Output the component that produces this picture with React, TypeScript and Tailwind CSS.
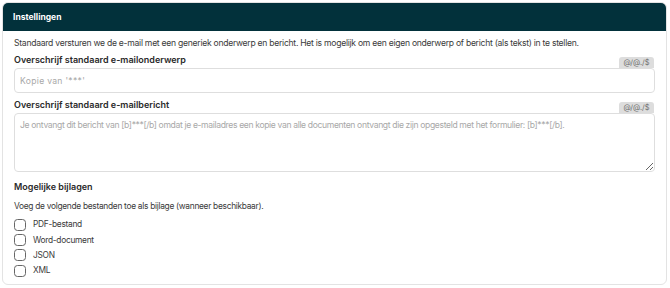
const font = { fontFamily: "Inter, 'Noto Sans', sans-serif" };

function FieldLabel({ label }: { label: string }) {
  return (
    <div className="flex items-end justify-between">
      <span className="pb-[2px] text-[9px] font-semibold leading-[12px] text-[#2a2a2a]">{label}</span>
      <span className="mr-[1px] flex h-[11px] w-[35px] items-center justify-center rounded-t-[3px] bg-[#dddddd] text-[7.5px] leading-none text-[#707070]">
        @/@./$
      </span>
    </div>
  );
}

function Check({ label }: { label: string }) {
  return (
    <label className="flex h-[15.3px] items-center gap-[7px]">
      <span className="h-[12px] w-[12px] rounded-[3.5px] border border-[#666666] bg-white" />
      <span className="text-[8.4px] leading-none tracking-[-0.3px] text-[#3a3a3a]">{label}</span>
    </label>
  );
}

export default function App() {
  return (
    <div className="h-[288px] w-[670px] bg-white pl-[2px] pt-[2px]" style={font}>
      <div className="w-[665px] overflow-hidden rounded-[6px] border border-[#e3e3e3] bg-white">
        <div className="flex h-[28px] items-center bg-[#02313b] px-[10px]">
          <span className="text-[8.5px] font-bold text-white">Instellingen</span>
        </div>
        <div className="flex flex-col px-[11px] pb-[6px] pt-[6px]">
          <p className="text-[8.6px] leading-[12px] tracking-[-0.27px] text-[#3a3a3a]">
            Standaard versturen we de e-mail met een generiek onderwerp en bericht. Het is mogelijk om een eigen onderwerp of bericht (als tekst) in te stellen.
          </p>
          <div className="mt-[5px]">
            <FieldLabel label="Overschrijf standaard e-mailonderwerp" />
            <input
              className="block h-[25px] w-full rounded-[4px] border border-[#dedede] px-[5px] text-[8.6px] tracking-[0.3px] outline-none placeholder:text-[#a8a8a8]"
              placeholder="Kopie van '***'"
            />
          </div>
          <div className="mt-[6px]">
            <FieldLabel label="Overschrijf standaard e-mailbericht" />
            <textarea
              className="block h-[59px] w-full resize-y rounded-[4px] border border-[#dedede] px-[5px] py-[5px] text-[8.6px] leading-[12px] tracking-[-0.36px] outline-none placeholder:text-[#a8a8a8]"
              placeholder="Je ontvangt dit bericht van [b]***[/b] omdat je e-mailadres een kopie van alle documenten ontvangt die zijn opgesteld met het formulier: [b]***[/b]."
            />
          </div>
          <h3 className="mt-[9px] text-[9px] font-semibold leading-[12px] text-[#2a2a2a]">Mogelijke bijlagen</h3>
          <p className="mt-[7px] text-[8.4px] leading-[12px] tracking-[-0.3px] text-[#3a3a3a]">
            Voeg de volgende bestanden toe als bijlage (wanneer beschikbaar).
          </p>
          <div className="mt-[5px] flex flex-col">
            <Check label="PDF-bestand" />
            <Check label="Word-document" />
            <Check label="JSON" />
            <Check label="XML" />
          </div>
        </div>
      </div>
    </div>
  );
}
